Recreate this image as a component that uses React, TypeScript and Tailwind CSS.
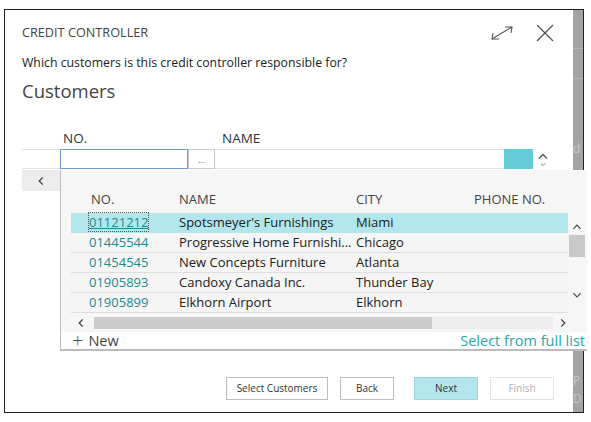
import React from "react";

const rows = [
  { no: "01121212", name: "Spotsmeyer's Furnishings", city: "Miami" },
  { no: "01445544", name: "Progressive Home Furnishi...", city: "Chicago" },
  { no: "01454545", name: "New Concepts Furniture", city: "Atlanta" },
  { no: "01905893", name: "Candoxy Canada Inc.", city: "Thunder Bay" },
  { no: "01905899", name: "Elkhorn Airport", city: "Elkhorn" },
];

const Chevron = ({ dir, className }: { dir: "up" | "down" | "left" | "right"; className?: string }) => {
  const pts = {
    up: "2,8 7,3 12,8",
    down: "2,3 7,8 12,3",
    left: "8,2 3,7 8,12",
    right: "3,2 8,7 3,12",
  }[dir];
  const box = dir === "up" || dir === "down" ? "0 0 14 11" : "0 0 11 14";
  return (
    <svg viewBox={box} className={className} fill="none" stroke="currentColor" strokeWidth="1.6">
      <polyline points={pts} />
    </svg>
  );
};

const App: React.FC = () => {
  return (
    <div
      className="relative w-[591px] h-[422px] bg-white pt-[9px] pl-[4px] text-[#212121]"
      style={{ fontFamily: '"Open Sans", "Noto Sans", sans-serif' }}
    >
      <div className="w-[580px] h-[404px] border border-[#222] flex">
        {/* DIALOG */}
        <div className="flex-1 flex flex-col bg-white">
          <div className="flex items-center h-[30px] mt-[8px] pl-[17px] pr-[19px]">
            <span className="text-[12.7px] text-[#444]">CREDIT CONTROLLER</span>
            <div className="ml-auto flex items-center gap-[22px] text-[#555]">
              <svg viewBox="0 0 24 16" className="w-[24px] h-[16px]" fill="none" stroke="currentColor" strokeWidth="1.1">
                <line x1="2" y1="14" x2="22" y2="2" />
                <polyline points="15,2 22,2 21,8" />
                <polyline points="3,8 2,14 9,14" />
              </svg>
              <svg viewBox="0 0 18 18" className="w-[18px] h-[18px]" fill="none" stroke="currentColor" strokeWidth="1.2">
                <line x1="1" y1="1" x2="17" y2="17" />
                <line x1="17" y1="1" x2="1" y2="17" />
              </svg>
            </div>
          </div>

          <div className="pl-[17px] mt-[6px] text-[12.3px] leading-[18px]">
            Which customers is this credit controller responsible for?
          </div>

          <div className="pl-[17px] mt-[6px] text-[18.5px] leading-[26px] text-[#444]">Customers</div>

          {/* grid headers */}
          <div className="flex mt-[24px] h-[20px] items-center text-[13.5px] text-[#333]">
            <span className="ml-[58px] w-[159px]">NO.</span>
            <span>NAME</span>
          </div>

          {/* input row */}
          <div className="flex ml-[17px] mr-[20px] h-[20px] mt-[1px]">
            <div className="w-[38px] border-y border-[#e0e0e0]" />
            <div className="w-[128px] border border-[#6b9bd1]" />
            <div className="w-[27px] border border-[#c8c8c8] text-[9px] text-[#777] flex items-center justify-center leading-none">
              ...
            </div>
            <div className="flex-1 border-y border-[#e0e0e0]" />
            <div className="w-[29px] bg-[#62cbd7]" />
            <div className="w-[20px] flex flex-col items-center justify-center text-[#555]">
              <Chevron dir="up" className="w-[12px] h-[9px]" />
              <Chevron dir="down" className="w-[8px] h-[5px] mt-[1px]" />
            </div>
          </div>

          {/* horizontal scroll row behind dropdown */}
          <div className="flex ml-[17px] h-[21px] mt-[1px]">
            <div className="w-[38px] bg-[#ececec] flex items-center justify-center text-[#333]">
              <Chevron dir="left" className="w-[8px] h-[10px]" />
            </div>
          </div>

          {/* buttons */}
          <div className="mt-auto mb-[12px] flex justify-end gap-[12px] pr-[19px] text-[10px]">
            <button className="w-[102px] h-[23px] border border-[#bdbdbd] bg-white text-[#333]">Select Customers</button>
            <button className="w-[54px] h-[23px] border border-[#bdbdbd] bg-white text-[#333]">Back</button>
            <button className="w-[64px] h-[23px] ml-[8px] border border-[#9fd6dd] bg-[#b3e6ec] text-[#333]">Next</button>
            <button className="w-[64px] h-[23px] border border-[#e2e2e2] bg-white text-[#b0b0b0]">Finish</button>
          </div>
        </div>

        {/* page behind the dialog */}
        <div className="w-[10px] bg-[#a3a3a3] flex flex-col text-[#c8c8c8] text-[12px] leading-none overflow-hidden">
          <div className="h-[39px] border-b border-[#b5b5b5]" />
          <div className="h-[30px] border-b border-[#b5b5b5]" />
          <div className="mt-[64px]">d</div>
          <div className="mt-[220px]">P</div>
          <div className="mt-[6px]">D</div>
        </div>
      </div>

      {/* DROPDOWN LOOKUP */}
      <div className="absolute left-[60px] top-[170px] w-[527px] h-[181px] bg-[#f6f6f6] border-l border-b-2 border-[#bcbcbc] flex flex-col text-[13px]">
        <div className="h-[43px] shrink-0 flex items-end pb-[4px] pl-[30px] text-[13px] text-[#444]">
          <span className="w-[88px]">NO.</span>
          <span className="w-[177px]">NAME</span>
          <span className="w-[118px]">CITY</span>
          <span>PHONE NO.</span>
        </div>

        <div className="flex shrink-0">
          <div className="ml-[10px] w-[497px] flex flex-col">
            {rows.map((r, i) => (
              <div
                key={r.no}
                className={`h-[20px] flex items-center pl-[18px] border-b ${
                  i === 0 ? "bg-[#b3e6ec] border-[#b3e6ec]" : "bg-[#f5f5f5] border-[#dedede]"
                }`}
              >
                <span className="w-[90px]">
                  <span
                    className={`text-[#1c8b8f] leading-[14px] ${
                      i === 0 ? "underline outline outline-1 outline-dotted outline-[#555]" : ""
                    }`}
                  >
                    {r.no}
                  </span>
                </span>
                <span className="w-[177px] whitespace-nowrap overflow-hidden">{r.name}</span>
                <span>{r.city}</span>
              </div>
            ))}
          </div>
          <div className="w-[17px] flex flex-col items-center text-[#444]">
            <Chevron dir="up" className="w-[12px] h-[8px] mt-[10px]" />
            <div className="w-[16px] h-[22px] bg-[#c9c9c9] mt-[4px]" />
            <Chevron dir="down" className="w-[12px] h-[8px] mt-[34px]" />
          </div>
        </div>

        <div className="ml-[10px] w-[497px] h-[19px] shrink-0 flex items-center">
          <Chevron dir="left" className="w-[8px] h-[10px] ml-[6px] text-[#333]" />
          <div className="ml-[9px] w-[338px] h-[12px] bg-[#cbcbcb]" />
          <div className="flex-1 h-[12px] bg-[#ececec]" />
          <Chevron dir="right" className="w-[8px] h-[10px] ml-[6px] mr-[1px] text-[#333]" />
        </div>

        <div className="h-[17px] shrink-0 bg-white flex items-center pl-[11px] pr-[2px] text-[14.5px]">
          <span className="text-[#555] text-[20px] font-light leading-none mr-[5px]">+</span>
          <span className="text-[#444]">New</span>
          <span className="ml-auto text-[#2aa7ad]">Select from full list</span>
        </div>
      </div>
    </div>
  );
};

export default App;
